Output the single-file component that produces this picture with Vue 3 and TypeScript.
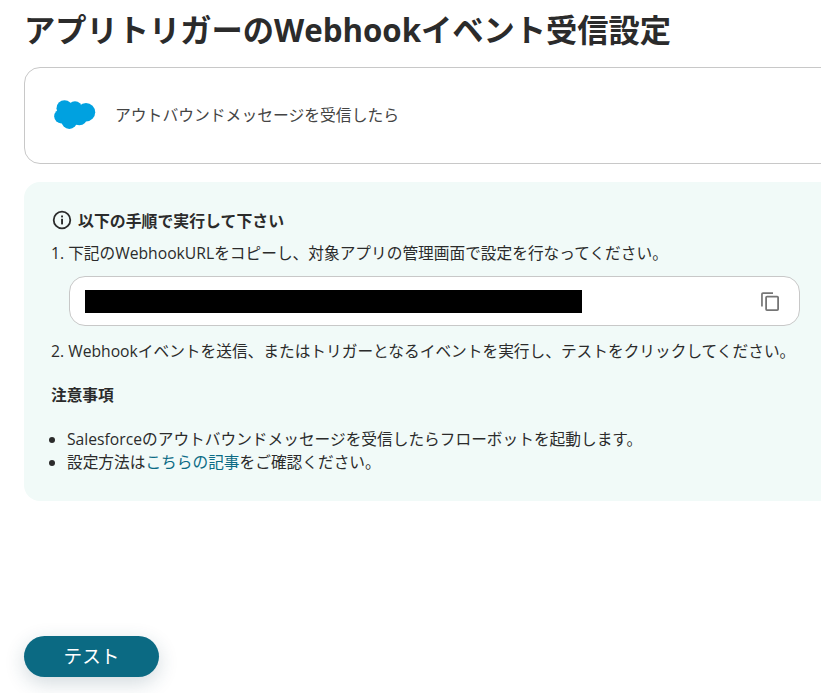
<script setup lang="ts">
const notes: { before: string; link?: string; after?: string }[] = [
  { before: 'Salesforceのアウトバウンドメッセージを受信したらフローボットを起動します。' },
  { before: '設定方法は', link: 'こちらの記事', after: 'をご確認ください。' },
]
</script>

<template>
  <main class="page">
    <h1 class="title">アプリトリガーのWebhookイベント受信設定</h1>

    <section class="app-card">
      <svg class="logo" viewBox="0 0 42 30" width="42" height="30" aria-hidden="true">
        <g fill="#00a1e0">
          <circle cx="10.5" cy="8.2" r="8" />
          <circle cx="21" cy="8.3" r="7" />
          <circle cx="32" cy="12.3" r="9.2" />
          <circle cx="7.3" cy="16.3" r="7.1" />
          <circle cx="15.3" cy="21" r="7.9" />
          <circle cx="25.3" cy="17.3" r="8" />
          <rect x="8" y="8" width="22" height="13" />
        </g>
      </svg>
      <span class="app-label">アウトバウンドメッセージを受信したら</span>
    </section>

    <section class="guide">
      <h2 class="guide-head">
        <svg viewBox="0 0 20 20" width="20" height="20" aria-hidden="true">
          <circle cx="10" cy="10" r="8.3" fill="none" stroke="#2b2b2b" stroke-width="1.8" />
          <rect x="9.1" y="8.8" width="1.9" height="5.6" fill="#2b2b2b" />
          <rect x="9.1" y="5.5" width="1.9" height="1.9" fill="#2b2b2b" />
        </svg>
        以下の手順で実行して下さい
      </h2>
      <p class="line first">1. 下記のWebhookURLをコピーし、対象アプリの管理画面で設定を行なってください。</p>
      <div class="url-box">
        <div class="redacted"></div>
        <svg class="copy" viewBox="0 0 24 24" width="24" height="24" aria-hidden="true">
          <path fill="#757575" d="M5 3.2h10v1.7H5.2a.4.4 0 0 0-.4.4v12.2H3.1V5.1A1.9 1.9 0 0 1 5 3.2z" />
          <path fill="#757575" fill-rule="evenodd" d="M9 6.8h10.2A1.8 1.8 0 0 1 21 8.6v11.6a1.8 1.8 0 0 1-1.8 1.8H9a1.8 1.8 0 0 1-1.8-1.8V8.6A1.8 1.8 0 0 1 9 6.8zm0 1.8v11.6h10.2V8.6H9z" />
        </svg>
      </div>
      <p class="line second">2. Webhookイベントを送信、またはトリガーとなるイベントを実行し、テストをクリックしてください。</p>
      <h3 class="notes-head">注意事項</h3>
      <ul class="notes">
        <li v-for="note in notes" :key="note.before">
          {{ note.before }}<a v-if="note.link" class="link" href="#">{{ note.link }}</a>{{ note.after }}
        </li>
      </ul>
    </section>

    <button class="test" type="button">テスト</button>
  </main>
</template>

<style>
html, body { margin: 0; background: #fff; overflow: hidden; }
</style>

<style scoped>
.page {
  box-sizing: border-box;
  width: 821px;
  height: 693px;
  padding-left: 24px;
  overflow: hidden;
  display: flex;
  flex-direction: column;
  color: #2b2b2b;
  font-family: "Open Sans", "Noto Sans CJK JP", sans-serif;
  font-size: 15.7px;
}
.title {
  flex: none;
  margin: 8px 0 0;
  height: 59px;
  line-height: 44px;
  font-size: 31.25px;
  font-weight: 700;
  white-space: nowrap;
}
.app-card {
  flex: none;
  box-sizing: border-box;
  width: 840px;
  height: 97px;
  display: flex;
  align-items: center;
  gap: 19px;
  padding-left: 29px;
  background: #fff;
  border: 1px solid #c8c8c8;
  border-radius: 16px;
}
.logo { flex: none; margin-top: -1px; }
.app-label { font-size: 15.8px; color: #444; margin-top: -3px; }
.guide {
  flex: none;
  box-sizing: border-box;
  width: 840px;
  height: 319px;
  margin-top: 18px;
  padding: 27px 0 0 27px;
  background: #f1faf8;
  border-radius: 16px;
}
.guide-head {
  display: flex;
  align-items: center;
  gap: 6px;
  margin: 0;
  height: 22px;
  font-size: 15.9px;
  font-weight: 700;
}
.guide-head svg { margin-left: 1px; }
.line {
  margin: 0;
  line-height: 22px;
  white-space: nowrap;
}
.first { margin-top: 11px; }
.url-box {
  box-sizing: border-box;
  width: 731px;
  height: 50px;
  margin: 12px 0 0 18px;
  display: flex;
  align-items: center;
  justify-content: space-between;
  padding: 0 17px 0 15px;
  background: #fff;
  border: 1px solid #c8c8c8;
  border-radius: 16px;
}
.redacted { width: 497px; height: 23px; background: #000; }
.copy { flex: none; }
.second { margin-top: 14px; }
.notes-head {
  margin: 22px 0 0;
  height: 22px;
  line-height: 22px;
  font-size: 15.7px;
  font-weight: 700;
}
.notes {
  margin: 22px 0 0;
  padding-left: 16px;
  line-height: 23px;
  white-space: nowrap;
}
.link { color: #0b6b85; text-decoration: none; }
.test {
  flex: none;
  width: 135px;
  height: 41px;
  margin-top: 135px;
  padding: 0 0 4px;
  border: 0;
  border-radius: 21px;
  background: #0b6a83;
  color: #fff;
  font-family: inherit;
  font-size: 18.6px;
  box-shadow: 0 6px 20px rgba(30, 70, 90, 0.2);
}
</style>
